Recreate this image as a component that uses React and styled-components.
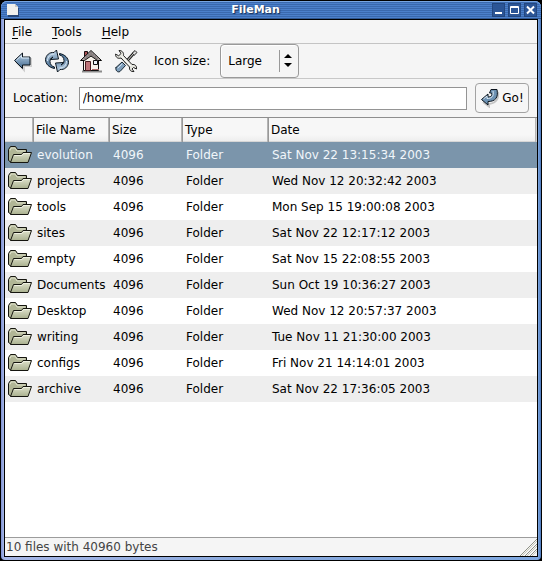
import React, { useState } from "react";
import styled, { createGlobalStyle } from "styled-components";

const GlobalStyle = createGlobalStyle`
  *, *::before, *::after { box-sizing: border-box; }
  body { margin: 0; background: #000; }
  body, button, input, select, table {
    font-family: "DejaVu Sans", "Liberation Sans", sans-serif;
    font-size: 12px;
    color: #000;
  }
  svg { display: block; flex: none; }
`;

const Frame = styled.div`
  display: flex;
  flex-direction: column;
  height: 100vh;
  background: #000;
  padding: 1px;
`;

const Chrome = styled.div`
  flex: 1;
  min-height: 0;
  display: flex;
  flex-direction: column;
  padding: 0 3px 3px;
  border-radius: 6px 6px 4px 4px;
  background: linear-gradient(90deg, #8093d4 0, #a6b6e6 3px, #87a8dc 50%, #7fa8e0 calc(100% - 3px), #4c78bc 100%);
`;

const TitleBar = styled.header`
  display: grid;
  grid-template-columns: 20px 1fr 52px;
  align-items: center;
  height: 18px;
  margin: 0 -3px;
  padding: 0 4px 0 5px;
  border-radius: 6px 6px 0 0;
  background: repeating-linear-gradient(180deg, #4b80cb 0, #4b80cb 1px, #3a69ae 1px, #3a69ae 2px);
  box-shadow: inset 0 1px 0 #78a6e2, inset 0 -1px 0 #2f568f;
`;

const Title = styled.h1`
  margin: 0;
  text-align: center;
  font-size: 11px;
  line-height: 16px;
  color: #fff;
  text-shadow: 1px 1px 1px #142c55;
`;

const WindowButtons = styled.div`
  display: flex;
  justify-content: flex-end;
  gap: 3px;
`;

const WindowButton = styled.button`
  width: 13px;
  height: 14px;
  padding: 0;
  border: 1px solid #23477f;
  background: #2b5596;
  display: grid;
  place-items: center;
`;

const Body = styled.main`
  flex: 1;
  min-height: 0;
  display: flex;
  flex-direction: column;
  border: 1px solid #000;
  background: #f5f5f5;
`;

const MenuBar = styled.nav`
  display: flex;
  gap: 20px;
  height: 24px;
  padding: 0 7px;
  border-bottom: 1px solid #c4c4c4;
`;

const MenuItem = styled.button`
  padding: 0;
  border: 0;
  background: none;
  line-height: 22px;
`;

const Key = styled.span`
  text-decoration: underline;
  text-underline-offset: 2px;
`;

const Toolbar = styled.div`
  display: flex;
  align-items: center;
  height: 35px;
  padding: 0 5px;
  border-bottom: 1px solid #c8c8c8;
`;

const ToolButton = styled.button`
  width: 35px;
  height: 30px;
  padding: 0;
  border: 0;
  background: none;
  display: flex;
  align-items: center;
`;

const SizeLabel = styled.label`
  margin: 0 10px 0 4px;
`;

const SelectBox = styled.div`
  position: relative;
  width: 79px;
`;

const Select = styled.select`
  appearance: none;
  display: block;
  width: 100%;
  height: 34px;
  padding: 0 24px 0 7px;
  border: 1px solid #9a9a9a;
  border-radius: 4px;
  background: #f5f5f5;
  box-shadow: inset 1px 1px 0 #fff;
`;

const SelectMark = styled.svg`
  position: absolute;
  right: 4px;
  top: 5px;
  pointer-events: none;
`;

const LocationBar = styled.form`
  display: flex;
  align-items: center;
  height: 38px;
  padding: 0 8px;
`;

const LocationLabel = styled.label`
  margin-right: 11px;
`;

const LocationInput = styled.input`
  flex: 1;
  min-width: 0;
  height: 23px;
  padding: 0 3px;
  border: 1px solid #949494;
  border-radius: 0;
  background: #fff;
`;

const GoButton = styled.button`
  display: flex;
  align-items: center;
  justify-content: center;
  gap: 2px;
  width: 54px;
  height: 30px;
  margin-left: 8px;
  padding: 0;
  border: 1px solid #a2a2a2;
  border-radius: 4px;
  background: #f6f6f6;
  white-space: nowrap;
`;

const ListArea = styled.section`
  flex: 1;
  min-height: 0;
  overflow: hidden;
  border-top: 1px solid #8e8e8e;
  background: #fff;
`;

const FileTable = styled.table`
  width: 100%;
  table-layout: fixed;
  border-collapse: separate;
  border-spacing: 0;
`;

const Column = styled.col`
  width: ${(p) => p.$width};
`;

const HeadCell = styled.th`
  height: 24px;
  padding: 0 0 0 2px;
  text-align: left;
  font-weight: normal;
  white-space: nowrap;
  background: linear-gradient(#f7f7f7 70%, #ececec);
  border-right: 1px solid #999;
  box-shadow: inset -1px 0 0 #b4b4b4, inset 0 -1px 0 #d6d6d6;
  &:last-child { border-right-color: #d0d0d0; }
`;

const Row = styled.tr`
  background: ${(p) => (p.$selected ? "#7b95ab" : p.$shaded ? "#eeeeee" : "#ffffff")};
  color: ${(p) => (p.$selected ? "#f1f6fa" : "#000000")};
`;

const Cell = styled.td`
  height: 26px;
  padding: 0 0 0 3px;
  white-space: nowrap;
`;

const StatusBar = styled.footer`
  display: flex;
  justify-content: space-between;
  align-items: flex-end;
  height: 19px;
  padding-left: 1px;
  border-top: 1px solid #9c9c9c;
  line-height: 18px;
  color: #444;
`;

const Gradients = () => (
  <svg width="0" height="0" viewBox="0 0 1 1" aria-hidden="true">
    <defs>
      <linearGradient id="steel" x1="0" y1="0" x2="0" y2="1">
        <stop offset="0" stopColor="#bcd2e6" />
        <stop offset="1" stopColor="#41698f" />
      </linearGradient>
      <linearGradient id="khaki" x1="0" y1="0" x2="0" y2="1">
        <stop offset="0" stopColor="#dfe2cc" />
        <stop offset="1" stopColor="#a9b08e" />
      </linearGradient>
    </defs>
  </svg>
);

const PageIcon = () => (
  <svg width="13" height="14" viewBox="0 0 13 14">
    <path d="M2 13h10V5" fill="none" stroke="#274777" strokeWidth="2" />
    <path d="M1 1h8l3 3v8H1z" fill="#f0f0ec" />
    <path d="M9 1v3h3" fill="#c8c8c4" />
  </svg>
);

const BackIcon = () => (
  <svg width="24" height="24" viewBox="0 0 24 24">
    <path d="M6 13l8 8v-4h7V9" fill="none" stroke="#cfcfcf" strokeWidth="2" />
    <path d="M4.500 11.500l8-7.500v4H20v8h-7.500v3.500z" fill="url(#steel)" stroke="#0b141d" />
    <path d="M6.500 11l5-4.500V9H19" fill="none" stroke="#d8e7f3" />
  </svg>
);

const Swirl = () => (
  <>
    <path
      d="M9.500 19.500C4 18.500 .5 15 .5 10.500 1 6 4.500 3 9 3.500L11.500 1l2 9-8 .5L8 8c-2 .5-3 2-3 4.500 0 3 2 5 4.500 5.500z"
      fill="url(#steel)"
      stroke="#0d1720"
      strokeLinejoin="round"
    />
    <path d="M2.500 12c0-4 2.500-7 7-7" fill="none" stroke="#dceaf5" />
  </>
);

const RefreshIcon = () => (
  <svg width="24" height="24" viewBox="0 0 24 24">
    <Swirl />
    <g transform="rotate(180 12 12)"><Swirl /></g>
  </svg>
);

const HomeIcon = () => (
  <svg width="24" height="24" viewBox="0 0 24 24">
    <path d="M2 22.500h20" stroke="#8b8b8b" strokeWidth="2" />
    <path d="M4.500 8V2.500h3V7" fill="#a85054" stroke="#1b1112" />
    <path d="M3.500 11L11 4l7.500 7v10.500h-15z" fill="#f8f3ec" stroke="#111" />
    <path d="M.5 11.500L11 1.500l10.500 10h-4L11 7l-6.500 4.500z" fill="#b5adad" stroke="#080808" />
    <path d="M5 8.500v2M7 6.500v3M9 4.500v3M11 3v4M13 4.500v3M15 6.500v3M17 8.500v2" stroke="#5a5252" />
    <path d="M5.500 12.500h5v9h-5z" fill="#bf757a" stroke="#4a1c20" />
    <path d="M13.500 11.500h4v4h-4z" fill="#eaf2f8" stroke="#111" />
    <path d="M12 20.500h7" stroke="#a66" />
  </svg>
);

const ToolsIcon = () => (
  <svg width="24" height="24" viewBox="0 0 24 24" strokeLinejoin="round" strokeLinecap="round">
    <path d="M11 13l8-9" stroke="#222" strokeWidth="3" />
    <path d="M17.500 4L20 1.500l2 2L19.500 6z" fill="#ddd" stroke="#222" />
    <path d="M11 13l8-9" stroke="#d9d9d5" />
    <path
      d="M.5 5.500C.5 8.500 3 10 6 9l8.500 9c-.5 3 1.500 5 4.500 4.500L17 20l1.500-1.500 3 1.500c.5-3-1.500-5-4.500-4.500L8.500 6.500C9 3.500 7 1.500 4 1.500l2 3-2 2z"
      fill="#e6e6df"
      stroke="#222"
    />
    <path d="M7 7.500l8.500 9" stroke="#fff" />
    <path d="M1 18.500l6-5.500 3.500 3.500-5.500 6C2.500 24 0 21 1 18.500z" fill="#7f9fbc" stroke="#1b2934" />
    <path d="M3 19l4-4" stroke="#d0e1ee" />
  </svg>
);

const GoIcon = () => (
  <svg width="20" height="20" viewBox="0 0 20 20">
    <path d="M3 14l6 4.500V16c7-1 10-5 9-12" fill="none" stroke="#c4c4c4" strokeWidth="2" />
    <path d="M1.500 11.500L8 6v3c3 0 4.500-1.500 3.500-4H9.500l1.500-3.500h6c1.500 8-1.500 12-9 12V17z" fill="#6d92b3" stroke="#0b141d" strokeLinejoin="round" />
    <path d="M3.500 11L7 8v2.500c5 0 7-2.500 6-7.500" fill="none" stroke="#dce8f2" />
  </svg>
);

const FolderIcon = () => (
  <svg width="25" height="20" viewBox="0 0 25 20" strokeLinejoin="round">
    <path d="M.5 15.500V4.500l2-3h5l2 3h9v12l-15 1z" fill="#b1b696" stroke="#15150f" />
    <path d="M2 5.500L3 3h4l2 3h8" fill="none" stroke="#e0e2cd" />
    <path d="M2.500 17.500l3-8h8l1.500-2h8.500l-3.500 10z" fill="url(#khaki)" stroke="#15150f" />
    <path d="M6.500 10.500H14l1.500-2H22" fill="none" stroke="#eff1e2" />
  </svg>
);

const Grip = () => (
  <svg width="17" height="18" viewBox="0 0 17 18">
    <path d="M0 18L17 1M5 18L17 6M10 18l7-7" stroke="#8f9186" strokeWidth="1" />
    <path d="M2 18L17 3M7 18L17 8M12 18l5-5" stroke="#c9cbbb" strokeWidth="1" />
  </svg>
);

const files = [
  ["evolution", "Sat Nov 22 13:15:34 2003"],
  ["projects", "Wed Nov 12 20:32:42 2003"],
  ["tools", "Mon Sep 15 19:00:08 2003"],
  ["sites", "Sat Nov 22 12:17:12 2003"],
  ["empty", "Sat Nov 15 22:08:55 2003"],
  ["Documents", "Sun Oct 19 10:36:27 2003"],
  ["Desktop", "Wed Nov 12 20:57:37 2003"],
  ["writing", "Tue Nov 11 21:30:00 2003"],
  ["configs", "Fri Nov 21 14:14:01 2003"],
  ["archive", "Sat Nov 22 17:36:05 2003"],
];

const tools = [
  ["Back", BackIcon],
  ["Reload", RefreshIcon],
  ["Home", HomeIcon],
  ["Preferences", ToolsIcon],
];

export default function App() {
  const [selected, setSelected] = useState(0);
  return (
    <>
      <GlobalStyle />
      <Frame>
        <Chrome>
          <TitleBar>
            <PageIcon />
            <Title>FileMan</Title>
            <WindowButtons>
              <WindowButton aria-label="Minimize">
                <svg width="11" height="12" viewBox="0 0 11 12"><path d="M2 9h7" stroke="#fff" strokeWidth="2" /></svg>
              </WindowButton>
              <WindowButton aria-label="Maximize">
                <svg width="11" height="12" viewBox="0 0 11 12"><path d="M1.500 9.500v-7h8v7zM1.500 3.500h8" fill="none" stroke="#fff" /></svg>
              </WindowButton>
              <WindowButton aria-label="Close">
                <svg width="11" height="12" viewBox="0 0 11 12"><path d="M2 2.500l7 7M9 2.500l-7 7" stroke="#fff" strokeWidth="2" /></svg>
              </WindowButton>
            </WindowButtons>
          </TitleBar>
          <Body>
            <MenuBar>
              {["File", "Tools", "Help"].map((name) => (
                <MenuItem key={name}><Key>{name[0]}</Key>{name.slice(1)}</MenuItem>
              ))}
            </MenuBar>
            <Toolbar>
              {tools.map(([name, Icon]) => (
                <ToolButton key={name} aria-label={name}><Icon /></ToolButton>
              ))}
              <SizeLabel htmlFor="icon-size">Icon size:</SizeLabel>
              <SelectBox>
                <Select id="icon-size" defaultValue="Large">
                  <option>Small</option>
                  <option>Large</option>
                </Select>
                <SelectMark width="16" height="24" viewBox="0 0 16 24">
                  <path d="M.5 1v22" stroke="#999" />
                  <path d="M5 9l4-4 4 4zM5 14l4 4 4-4z" />
                </SelectMark>
              </SelectBox>
            </Toolbar>
            <LocationBar onSubmit={(e) => e.preventDefault()}>
              <LocationLabel htmlFor="location">Location:</LocationLabel>
              <LocationInput id="location" defaultValue="/home/mx" />
              <GoButton type="submit"><GoIcon />Go!</GoButton>
            </LocationBar>
            <ListArea>
              <FileTable>
                <colgroup>
                  <Column $width="29px" />
                  <Column $width="76px" />
                  <Column $width="73px" />
                  <Column $width="86px" />
                  <Column $width="auto" />
                </colgroup>
                <thead>
                  <tr>
                    <HeadCell aria-label="Icon" />
                    <HeadCell>File Name</HeadCell>
                    <HeadCell>Size</HeadCell>
                    <HeadCell>Type</HeadCell>
                    <HeadCell>Date</HeadCell>
                  </tr>
                </thead>
                <tbody>
                  {files.map(([name, date], i) => (
                    <Row key={name} $selected={i === selected} $shaded={i % 2 === 1} onClick={() => setSelected(i)}>
                      <Cell><FolderIcon /></Cell>
                      <Cell>{name}</Cell>
                      <Cell>4096</Cell>
                      <Cell>Folder</Cell>
                      <Cell>{date}</Cell>
                    </Row>
                  ))}
                </tbody>
              </FileTable>
            </ListArea>
            <StatusBar>
              <span>10 files with 40960 bytes</span>
              <Grip />
            </StatusBar>
          </Body>
        </Chrome>
      </Frame>
      <Gradients />
    </>
  );
}
